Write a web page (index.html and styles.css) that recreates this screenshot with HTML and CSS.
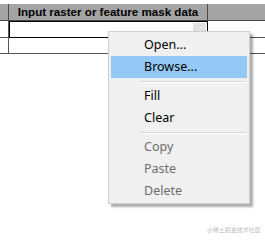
FILE: index.html
```html
<!DOCTYPE html>
<html>
<head>
<meta charset="utf-8">
<link rel="stylesheet" href="styles.css">
</head>
<body>
<div class="grid">
  <div class="hd c1"></div>
  <div class="hd c2">Input raster or feature mask data</div>
  <div class="hd c3"></div>

  <div class="cell c1"></div>
  <div class="cell c2 sel"><div class="editor"><span class="btn">...</span></div></div>
  <div class="cell c3"></div>

  <div class="cell c1"></div>
  <div class="cell c2"></div>
  <div class="cell c3"></div>
</div>

<div class="menu">
  <div class="item">Open...</div>
  <div class="item hl">Browse...</div>
  <div class="sep"></div>
  <div class="item">Fill</div>
  <div class="item">Clear</div>
  <div class="sep"></div>
  <div class="item dis">Copy</div>
  <div class="item dis">Paste</div>
  <div class="item dis">Delete</div>
</div>

<div class="wm">@稀土掘金技术社区</div>
</body>
</html>
```
FILE: styles.css
```css
html, body {
  margin: 0;
  background: #ffffff;
  width: 265px;
  height: 245px;
  overflow: hidden;
  position: relative;
}
.grid {
  display: grid;
  grid-template-columns: 9px 199px 1fr;
  grid-template-rows: 17px 17px 16px;
  margin-top: 4px;
}
.hd {
  background: #a4a4a4;
  border-right: 1px solid #4a4a4a;
  border-bottom: 1px solid #4a4a4a;
  box-sizing: border-box;
  font-family: "Liberation Sans", Arial, sans-serif;
  font-weight: bold;
  font-size: 11.6px;
  color: #000;
  text-align: center;
  line-height: 16px;
}
.hd.c3 { border-right: none; }
.cell {
  background: #fff;
  border-right: 1px solid #555;
  border-bottom: 1px solid #555;
  box-sizing: border-box;
}
.cell.c3 { border-right: none; }
.cell.sel {
  border: none;
  position: relative;
  background: #fff;
}
.editor {
  box-sizing: border-box;
  height: 17px;
  border: 1px solid #000;
  display: flex;
  justify-content: flex-end;
  padding: 1px 1px 0 0;
}
.btn {
  width: 13px;
  height: 14px;
  background: #e2e2e2;
  color: #444;
  font-family: "Liberation Sans", sans-serif;
  font-size: 8px;
  line-height: 18px;
  text-align: center;
  overflow: hidden;
}
.menu {
  position: absolute;
  left: 108px;
  top: 31px;
  width: 142px;
  box-sizing: border-box;
  background: #f0f0f0;
  border: 1px solid #cfcfcf;
  padding: 2px 2px 1px 2px;
  box-shadow: 3px 3px 2px rgba(0, 0, 0, 0.32);
  font-family: "Noto Sans", "Open Sans", sans-serif;
  font-size: 12.5px;
}
.item {
  height: 22px;
  line-height: 22px;
  padding-left: 33px;
  color: #000;
}
.item.hl { background: #94c9f5; }
.item.dis { color: #6d6d6d; }
.sep {
  height: 7px;
  position: relative;
}
.sep::after {
  content: "";
  position: absolute;
  left: 28px;
  right: 0;
  top: 3px;
  border-top: 1px solid #d7d7d7;
  border-bottom: 1px solid #ffffff;
}
.wm {
  position: absolute;
  left: 207px;
  top: 226px;
  font-family: "Noto Sans CJK SC", sans-serif;
  font-size: 6px;
  line-height: 8px;
  white-space: nowrap;
  color: #bdbdbd;
}
```
